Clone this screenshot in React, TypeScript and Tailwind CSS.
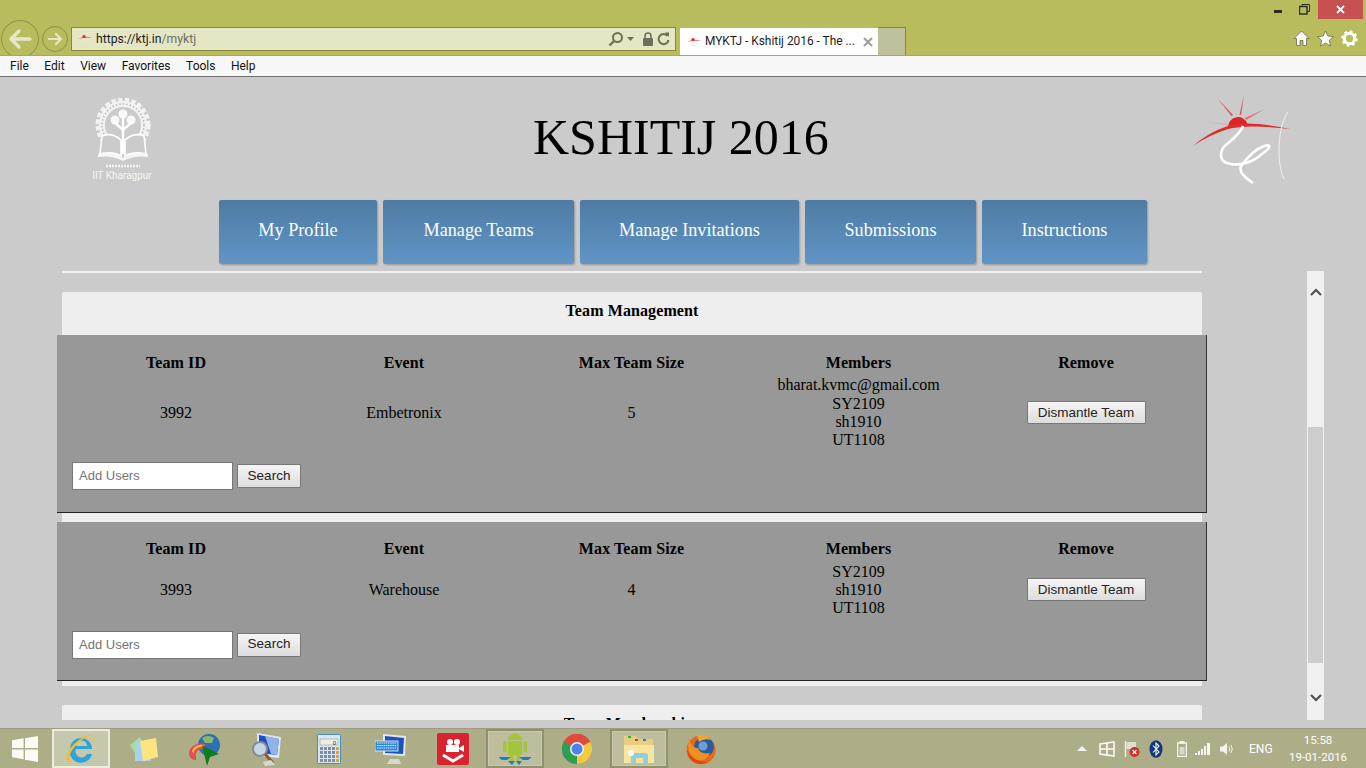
import React from 'react';

const UI = 'font-["Roboto",sans-serif]';

const Favicon = () => (
  <svg width="16" height="16" viewBox="0 0 16 16">
    <path d="M1 8 Q8 4 15 7 Q8 6 1 8Z" fill="#e86a6a" />
    <circle cx="7" cy="5.5" r="1.6" fill="#e02828" />
    <path d="M7 8 Q4 12 9 12 L12 9" fill="none" stroke="#e8e8e0" strokeWidth="1" />
  </svg>
);

const IitLogo = () => (
  <svg width="64" height="84" viewBox="0 0 64 84">
    <circle cx="33" cy="27" r="25" fill="none" stroke="#f2f2f2" strokeWidth="5" strokeDasharray="4.4 2.2" />
    <circle cx="33" cy="27" r="21" fill="none" stroke="#f2f2f2" strokeWidth="6" />
    <circle cx="33" cy="27" r="21" fill="none" stroke="#b8b8b8" strokeWidth="1.5" strokeDasharray="1.5 2" />
    <circle cx="33" cy="16" r="4.5" fill="#f8f8f8" />
    <circle cx="25" cy="22" r="4.5" fill="#f8f8f8" />
    <circle cx="41" cy="22" r="4.5" fill="#f8f8f8" />
    <path d="M33 18 V54 M33 32 L24 24 M33 32 L42 24" stroke="#fff" strokeWidth="2.4" fill="none" />
    <g transform="translate(0 -4)">
      <path d="M12 42 Q22 38 31 46 V62 Q22 57 10 60 Z M54 42 Q44 38 35 46 V62 Q44 57 56 60 Z" fill="#cbcbcb" stroke="#fff" strokeWidth="1.6" />
      <path d="M33 48 V60" stroke="#fff" strokeWidth="3" />
      <path d="M8 60 Q22 57 33 64 Q44 57 58 60 V63 Q44 61 33 67 Q22 61 8 63Z" fill="#f6f6f6" />
    </g>
    <path d="M16 68 H50" stroke="#f2f2f2" strokeWidth="2.4" strokeDasharray="2 1" />
    <text x="32" y="81" textAnchor="middle" fontSize="10" fill="#f4f4f4" fontFamily="Roboto, sans-serif">IIT Kharagpur</text>
  </svg>
);

const KtjLogo = () => (
  <svg width="102" height="94" viewBox="0 0 102 94">
    <path d="M13 30 L37 32 L37 33 Z" fill="#e8a0a0" />
    <path d="M53 3 L50 23 L48.5 23Z" fill="#d85050" />
    <path d="M27 7 L42 23 L40.5 24Z" fill="#d85050" />
    <path d="M74 17 L55 28 L54 26Z" fill="#e07070" />
    <path d="M37 35 A10 10 0 0 1 56.5 32 Q46 32 37 35Z" fill="#df2424" />
    <path d="M2 54 Q18 40 37 34 Q56 28 99 37 Q56 32 37 37 Q18 43 2 54Z" fill="#df2b2b" />
    <path d="M52 34 C49 42 42 47 36 52 C28 58 28 68 36 71 C48 75 62 70 71 62 C81 55 80 52 73 54 C65 57 56 66 50 74 C48 80 52 84 62 91" fill="none" stroke="#ffffff" strokeWidth="2.6" />
    <path d="M97 20 C90 30 88 45 88 60 C88 72 90 80 93 87" fill="none" stroke="#f4f4f4" strokeWidth="0.9" />
  </svg>
);

const Sticky = () => (
  <svg width="32" height="32" viewBox="0 0 32 32">
    <path d="M3 12 L13 4 L20 16 L9 22Z" fill="#a9dc9c" />
    <rect x="8" y="9" width="16" height="19" fill="#a5d3ee" />
    <path d="M13 8 L29 5 L31 24 L16 28Z" fill="#fbe580" />
  </svg>
);

const Idm = () => (
  <svg width="34" height="34" viewBox="0 0 34 34">
    <circle cx="21" cy="13" r="11" fill="#2b70b5" />
    <path d="M14 6 Q20 2 26 6 L24 11 L17 11Z" fill="#8ab86a" />
    <path d="M1 22 A12 10 0 0 1 17 12 L17 17 A7 6 0 0 0 8 24 L8 28 Q2 28 1 22Z" fill="#e34f4f" />
    <path d="M4 19 A10 8 0 0 1 16 13 L16 15 A8 6 0 0 0 6 22Z" fill="#f3c13a" />
    <path d="M14 13 L31 22 L22 25 L19 34Z" fill="#0f7a1e" />
  </svg>
);

const MagMonitor = () => (
  <svg width="32" height="34" viewBox="0 0 32 34">
    <path d="M6 1 L30 5 L28 26 L6 24Z" fill="#dde7f6" />
    <path d="M8 3 L28 7 L26 23 L8 21Z" fill="#1d4fc0" />
    <path d="M14 4 L28 7 L26 23 L20 22Z" fill="#92b3ea" />
    <circle cx="9" cy="17" r="7" fill="#c5d6e6" stroke="#8b8b8b" strokeWidth="2" />
    <path d="M14 22 L22 31" stroke="#8a5a2c" strokeWidth="3" />
    <path d="M12 30 L20 28 L24 33 L14 34Z" fill="#d6d6d0" />
  </svg>
);

const Calc = () => (
  <svg width="24" height="30" viewBox="0 0 24 30">
    <rect x="0.5" y="0.5" width="23" height="29" rx="1" fill="#d7e8f4" stroke="#3d8fc4" />
    <rect x="3" y="5" width="18" height="6" fill="#f1ede2" stroke="#8a8a80" strokeWidth="0.5" />
    <text x="19" y="10.5" textAnchor="end" fontSize="6" fill="#333" fontFamily="Roboto, sans-serif">0</text>
    {[13, 17, 21, 25].map((y) =>
      [3, 7, 11, 15, 19].map((x) => (
        <rect key={`${x}-${y}`} x={x} y={y} width="3" height="3" fill={x === 19 ? '#f09a28' : '#7c8ea0'} />
      )),
    )}
  </svg>
);

const KbMonitor = () => (
  <svg width="32" height="32" viewBox="0 0 32 32">
    <path d="M8 1 L31 3 L30 23 L8 22Z" fill="#dfe6f0" />
    <path d="M10 3 L29 5 L28 21 L10 20Z" fill="#1f52b8" />
    <path d="M15 26 L24 26 L26 31 L12 31Z" fill="#d8d8d0" />
    <rect x="0" y="8" width="23" height="10" fill="#3086d8" stroke="#cfe2f6" />
    {[10, 12.5, 15].map((y) => (
      <path key={y} d="M2 0 H21" transform={`translate(0 ${y})`} stroke="#e6f0fa" strokeWidth="1.2" strokeDasharray="1.5 0.7" />
    ))}
  </svg>
);

const VideoRed = () => (
  <svg width="32" height="32" viewBox="0 0 32 32">
    <rect width="32" height="32" rx="2" fill="#d9232e" />
    <circle cx="13" cy="9" r="3" fill="#fff" />
    <circle cx="20" cy="9" r="3" fill="#fff" />
    <path d="M9 12 H22 V19 H9Z M22 15 L27 12 V19 L22 16Z" fill="#fff" />
    <path d="M6 22 L16 28 L26 22" fill="none" stroke="#fff" strokeWidth="3" />
  </svg>
);

const Android = () => (
  <svg width="32" height="34" viewBox="0 0 32 34">
    <path d="M9 8 A7 6.5 0 0 1 23 8Z" fill="#a4c439" />
    <rect x="9" y="9" width="14" height="14" rx="1" fill="#a4c439" />
    <rect x="4" y="9" width="3.5" height="11" rx="1.7" fill="#a4c439" />
    <rect x="24.5" y="9" width="3.5" height="11" rx="1.7" fill="#a4c439" />
    <rect x="11" y="22" width="3.5" height="8" fill="#a4c439" />
    <rect x="17.5" y="22" width="3.5" height="8" fill="#a4c439" />
    <path d="M-1 25 H12 L8 28 H3Z M20 25 H33 L29 28 H24Z" fill="#1d7fbe" />
    <path d="M9 29 L13 33 L16 29Z M17 29 L20 33 L23 29Z" fill="#1d7fbe" />
  </svg>
);

const ChromeIcon = () => (
  <svg width="30" height="30" viewBox="0 0 30 30">
    <circle cx="15" cy="15" r="15" fill="#e04a3f" />
    <path d="M15 15 L2 7.5 A15 15 0 0 0 15 30Z" fill="#2f9e55" />
    <path d="M15 15 L15 30 A15 15 0 0 0 28 7.5 L28 7.5Z" fill="#f6c93e" />
    <path d="M15 15 L2 7.5 A15 15 0 0 1 28 7.5Z" fill="#de4b3d" />
    <circle cx="15" cy="15" r="7" fill="#f2f2f2" />
    <circle cx="15" cy="15" r="5.5" fill="#4a83ee" />
  </svg>
);

const Folder = () => (
  <svg width="32" height="32" viewBox="0 0 32 32">
    <path d="M1 3 H13 L15 6 H30 V14 H1Z" fill="#e9cd80" />
    <rect x="5" y="3" width="3" height="2" fill="#39a845" />
    <rect x="12" y="6" width="3" height="2" fill="#d43c2c" />
    <rect x="20" y="6" width="3" height="2" fill="#2a7ad0" />
    <path d="M1 12 H31 V30 H1Z" fill="#f8e6a0" />
    <path d="M8 31 V23 Q8 20 11 20 H22 Q25 20 25 23 V31 H20 V25 H13 V31Z" fill="#8fcde2" />
    <circle cx="8" cy="20" r="3" fill="#fdfcf0" />
  </svg>
);

const Firefox = () => (
  <svg width="30" height="32" viewBox="0 0 30 32">
    <circle cx="15" cy="17" r="14.5" fill="#e8681f" />
    <circle cx="18" cy="14" r="10" fill="#2a5c9c" />
    <circle cx="17" cy="13" r="4.5" fill="#6d9ed4" />
    <path d="M3 5 Q5 15 12 15 Q14 22 24 20 Q20 29 10 27 Q0 22 3 5Z" fill="#f09022" />
    <path d="M11 2 Q20 1 25 7 Q18 5 13 9Z" fill="#f3a52e" />
    <path d="M1 17 Q8 30 22 29 Q14 33 8 29 Q2 25 1 17Z" fill="#d9491a" />
  </svg>
);

const StartLogo = () => (
  <svg width="26" height="26" viewBox="0 0 28 28" fill="#fbfbf5">
    <path d="M0 4.5 L12.5 2.5 V13 H0Z M14 2.3 L28 0 V13 H14Z M0 14.5 H12.5 V25 L0 23Z M14 14.5 H28 V28 L14 25.5Z" />
  </svg>
);

const TaskButton = ({ state, children }: { state?: 'active' | 'open'; children: React.ReactNode }) => {
  const look =
    state === 'active'
      ? 'border-2 border-[#ededde] bg-[#c6c8ae]'
      : state === 'open'
        ? 'border-2 border-[#8f916e] bg-[#bcbe9d] shadow-[inset_0_0_0_1px_#c8cab0]'
        : 'border-2 border-transparent';
  return <div className={`flex h-[39px] w-[58px] shrink-0 items-center justify-center ${look}`}>{children}</div>;
};

const BrowserBar = () => (
  <div className={`shrink-0 ${UI}`}>
    <div className="h-[55px] bg-[#b8bc5c]">
      {/* window buttons */}
      <div className="flex h-[19px] items-start justify-end pr-[3px]">
        <div className="mr-[17px] mt-[10px] h-[3px] w-[8px] bg-[#2c2c1e]" />
        <svg className="mr-[8px] mt-[4px]" width="11" height="11" viewBox="0 0 11 11" fill="none" stroke="#2c2c1e">
          <rect x="0.5" y="2.5" width="7.5" height="7.5" strokeWidth="1.4" />
          <path d="M3 2.5 V0.5 H10.5 V7.5 H8" />
        </svg>
        <div className="flex h-[19px] w-[45px] items-center justify-center bg-[#c75050]">
          <svg width="9" height="9" viewBox="0 0 9 9" stroke="#fff" strokeWidth="1.8">
            <path d="M1 1 L8 8 M8 1 L1 8" />
          </svg>
        </div>
      </div>
      <div className="mt-[1px] flex items-start">
        {/* back and forward */}
        <div className="ml-[1px] h-[35px] w-[38px] overflow-hidden">
          <div className="flex h-[38px] w-[38px] items-center justify-center rounded-full border border-[#8f9140]">
            <svg width="24" height="22" viewBox="0 0 24 22" fill="none" stroke="#e6e7c8" strokeWidth="3.4" strokeLinecap="round" strokeLinejoin="round">
              <path d="M11 3 L3 11 L11 19 M3 11 H22" />
            </svg>
          </div>
        </div>
        <div className="ml-[3px] mt-[6px] flex h-[26px] w-[26px] items-center justify-center rounded-full border border-[#8f9140]">
          <svg width="16" height="14" viewBox="0 0 16 14" fill="none" stroke="#e6e7c8" strokeWidth="2.2" strokeLinecap="round" strokeLinejoin="round">
            <path d="M9 2 L14 7 L9 12 M14 7 H2" />
          </svg>
        </div>
        <div className="ml-[3px] mt-[7px] flex h-[24px] w-[605px] items-center border border-[#85873a] bg-[#e5e6c4] pl-[5px] pr-[5px]">
          <Favicon />
          <span className="ml-[3px] flex-1 text-[12.2px] leading-none text-[#1c1c1c]">
            https://ktj.in<span className="text-[#6e6e60]">/myktj</span>
          </span>
          <svg width="16" height="16" viewBox="0 0 16 16" fill="none" stroke="#6e6e58" strokeWidth="2">
            <circle cx="9.5" cy="6.5" r="4.5" />
            <path d="M6 10 L1.5 14.5" strokeWidth="2.4" />
          </svg>
          <svg className="ml-[3px]" width="7" height="4" viewBox="0 0 7 4" fill="#6e6e58">
            <path d="M0 0 H7 L3.5 4Z" />
          </svg>
          <svg className="ml-[8px]" width="12" height="14" viewBox="0 0 12 14">
            <path d="M3 6 V4 A3 3 0 0 1 9 4 V6" fill="none" stroke="#6e6e58" strokeWidth="1.6" />
            <rect x="1" y="6" width="10" height="8" rx="1" fill="#6e6e58" />
          </svg>
          <svg className="ml-[3px]" width="13" height="14" viewBox="0 0 13 14" fill="none" stroke="#6e6e58" strokeWidth="2">
            <path d="M10.5 4 A5 5 0 1 0 11.5 8" />
            <path d="M8 0.5 L12 0.5 L12 5Z" fill="#6e6e58" stroke="none" />
          </svg>
        </div>
        {/* tabs */}
        <div className="ml-[4px] mt-[8px] flex h-[27px] w-[198px] items-center bg-white pl-[6px] pr-[5px]">
          <Favicon />
          <span className="ml-[3px] flex-1 whitespace-nowrap pt-[1px] text-[11.9px] leading-none text-[#1c1c1c]">MYKTJ - Kshitij 2016 - The ...</span>
          <svg width="10" height="10" viewBox="0 0 10 10" stroke="#9c9c9c" strokeWidth="2">
            <path d="M1 1 L9 9 M9 1 L1 9" />
          </svg>
        </div>
        <div className="mt-[7px] h-[28px] w-[28px] border border-b-0 border-l-0 border-[#85873a] bg-[#bfc19c]" />
        <div className="ml-auto mr-[8px] mt-[10px] flex gap-[7px]">
          <svg width="17" height="17" viewBox="0 0 17 17" fill="#fff" stroke="#6a6a50" strokeWidth="0.8">
            <path d="M8.5 1 L16 8.5 H13.5 V15.5 H10 V10.5 H7 V15.5 H3.5 V8.5 H1Z" />
          </svg>
          <svg width="17" height="17" viewBox="0 0 17 17" fill="#fff" stroke="#6a6a50" strokeWidth="0.8">
            <path d="M8.5 1 L10.8 6 L16.5 6.6 L12.3 10.3 L13.5 16 L8.5 13 L3.5 16 L4.7 10.3 L0.5 6.6 L6.2 6Z" />
          </svg>
          <svg width="17" height="17" viewBox="0 0 17 17">
            <circle cx="8.5" cy="8.5" r="5.2" fill="none" stroke="#fff" strokeWidth="3" />
            <circle cx="8.5" cy="8.5" r="7" fill="none" stroke="#fff" strokeWidth="2.4" strokeDasharray="2.6 2.9" />
          </svg>
        </div>
      </div>
    </div>
    <div className="flex h-[22px] items-center gap-[15.5px] border-b border-t border-b-[#6f6f6f] border-t-[#a6a955] bg-[#f7f7f7] pl-[10px] text-[12px] leading-none text-[#111]">
      {['File', 'Edit', 'View', 'Favorites', 'Tools', 'Help'].map((m) => (
        <span key={m}>{m}</span>
      ))}
    </div>
  </div>
);

const NAV = [
  { label: 'My Profile', w: 'w-[158px]' },
  { label: 'Manage Teams', w: 'w-[191px]' },
  { label: 'Manage Invitations', w: 'w-[219px]' },
  { label: 'Submissions', w: 'w-[171px]' },
  { label: 'Instructions', w: 'w-[165px]' },
];

type Team = { id: string; event: string; size: string; members: string[]; pt: string; pb: string };

const TEAMS: Team[] = [
  { id: '3992', event: 'Embetronix', size: '5', members: ['bharat.kvmc@gmail.com', 'SY2109', 'sh1910', 'UT1108'], pt: 'pt-[19px]', pb: 'pb-[22px]' },
  { id: '3993', event: 'Warehouse', size: '4', members: ['SY2109', 'sh1910', 'UT1108'], pt: 'pt-[18px]', pb: 'pb-[21px]' },
];

const TeamCard = ({ team }: { team: Team }) => (
  <div className={`-mx-[5px] border-b border-r border-b-[#222] border-r-[#333] bg-[#989898] pl-[5px] ${team.pt} ${team.pb}`}>
    <div className="grid grid-cols-[228px_228px_227px_227px_228px] text-center text-[16px] leading-[18.3px] text-black">
      {['Team ID', 'Event', 'Max Team Size', 'Members', 'Remove'].map((h) => (
        <div key={h} className="pb-[4px] font-bold tracking-[0.1px]">{h}</div>
      ))}
      <div className="self-center">{team.id}</div>
      <div className="self-center">{team.event}</div>
      <div className="self-center">{team.size}</div>
      <div>
        {team.members.map((m) => (
          <div key={m}>{m}</div>
        ))}
      </div>
      <div className="flex items-center justify-center">
        <button className='mb-[1px] h-[23px] w-[119px] rounded-[1px] border border-[#777] bg-gradient-to-b from-[#f5f5f5] to-[#dddddd] font-["Liberation_Sans",sans-serif] text-[13.5px] leading-none text-[#222]'>
          Dismantle Team
        </button>
      </div>
    </div>
    <div className="ml-[10px] mt-[13px] flex items-center gap-[4px] font-['Liberation_Sans',sans-serif] leading-none">
      <div className="flex h-[28px] w-[161px] items-center border border-[#777] bg-white pb-[1px] pl-[6px] text-[13px] text-[#757575]">Add Users</div>
      <button className="h-[24px] w-[64px] rounded-[1px] border border-[#777] bg-gradient-to-b from-[#f5f5f5] to-[#dddddd] pb-[1px] text-[13.5px] text-[#222]">Search</button>
    </div>
  </div>
);

const Page = () => (
  <div className='flex min-h-0 flex-1 flex-col bg-[#cbcbcb] font-["Liberation_Serif",serif]'>
    <div className="flex h-[123px] shrink-0 items-start">
      <div className="ml-[90px] mt-[21px] shrink-0"><IitLogo /></div>
      <h1 className="ml-[379px] mt-[30px] whitespace-nowrap text-[50px] leading-[60px] text-black">KSHITIJ 2016</h1>
      <div className="ml-[362px] mt-[15px] shrink-0"><KtjLogo /></div>
    </div>
    <nav className="ml-[219px] flex shrink-0 gap-[6px]">
      {NAV.map((n) => (
        <a
          key={n.label}
          className={`flex h-[64px] items-center justify-center rounded-[2px] bg-gradient-to-b from-[#4e7ba3] to-[#6095c7] pb-[2px] text-[18.2px] text-white shadow-[1px_1px_2px_#999] ${n.w}`}
        >
          {n.label}
        </a>
      ))}
    </nav>
    <div className="mt-[7px] flex h-[449px] shrink-0 overflow-hidden">
      <div className="ml-[62px] w-[1140px] shrink-0">
        <div className="h-[2px] rounded-[1px] bg-[#f1f1f1]" />
        <section className="mt-[19px] rounded-t-[2px] bg-[#eeeeee] pb-[5px] pt-[10px] text-[16px]">
          <h2 className="mb-[14px] h-[19px] text-center font-bold leading-[18px] tracking-[0.1px] text-black">Team Management</h2>
          <div className="flex flex-col gap-[9px]">
            {TEAMS.map((t) => (
              <TeamCard key={t.id} team={t} />
            ))}
          </div>
        </section>
        <section className="mt-[19px] h-[40px] rounded-t-[2px] bg-[#eeeeee] pt-[10px] text-center text-[16px] font-bold leading-[18px] tracking-[0.1px] text-black">
          Team Memberships
        </section>
      </div>
      {/* page scrollbar */}
      <div className="ml-[105px] flex w-[17px] shrink-0 flex-col bg-[#f0f0f0]">
        <div className="flex h-[156px] justify-center pt-[17px]">
          <svg width="12" height="8" viewBox="0 0 12 8" fill="none" stroke="#505050" strokeWidth="2.2">
            <path d="M1 7 L6 2 L11 7" />
          </svg>
        </div>
        <div className="mx-[1px] h-[236px] bg-[#cdcdcd]" />
        <div className="flex flex-1 justify-center pt-[31px]">
          <svg width="12" height="8" viewBox="0 0 12 8" fill="none" stroke="#505050" strokeWidth="2.2">
            <path d="M1 1 L6 6 L11 1" />
          </svg>
        </div>
      </div>
    </div>
  </div>
);

const Taskbar = () => (
  <div className={`flex h-[40px] shrink-0 items-center border-t border-[#9c9c82] bg-[#adae87] ${UI}`}>
    <div className="flex w-[50px] shrink-0 justify-center"><StartLogo /></div>
    <div className="ml-[2px] flex gap-[4px]">
      <TaskButton state="active">
        <svg width="30" height="32" viewBox="0 0 30 32">
          <path d="M4 16 A11 11 0 0 1 26 16 H10 A6 6 0 0 0 21 21 H26 A11 11 0 0 1 4 16Z M10 13 H21 A5.5 5.5 0 0 0 10 13Z" fill="#2da3dc" fillRule="evenodd" />
          <path d="M27 2 Q20 0 8 11 Q-1 20 1 28 Q3 31 9 28 Q3 29 3 25 Q4 18 13 9 Q21 2 27 3 Q29 6 26 11 Q31 5 27 2Z" fill="#f4bd2b" />
        </svg>
      </TaskButton>
      <TaskButton><Sticky /></TaskButton>
      <TaskButton><Idm /></TaskButton>
      <TaskButton><MagMonitor /></TaskButton>
      <TaskButton><Calc /></TaskButton>
      <TaskButton><KbMonitor /></TaskButton>
      <TaskButton><VideoRed /></TaskButton>
      <TaskButton state="open"><Android /></TaskButton>
      <TaskButton><ChromeIcon /></TaskButton>
      <TaskButton state="open"><Folder /></TaskButton>
      <TaskButton><Firefox /></TaskButton>
    </div>
    <div className="ml-auto flex items-center text-white">
      <svg width="10" height="5" viewBox="0 0 10 5" fill="#f4f4ee"><path d="M5 0 L10 5 H0Z" /></svg>
      <svg className="ml-[12px]" width="16" height="16" viewBox="0 0 16 16" fill="none" stroke="#fbfbf5" strokeWidth="1.6">
        <path d="M1 3 L15 1 V15 L1 13Z M8 2 V14 M1 8 H15" />
      </svg>
      <svg className="ml-[9px]" width="16" height="18" viewBox="0 0 16 18">
        <path d="M1.5 1 V17" stroke="#f4f4ee" strokeWidth="1.4" />
        <path d="M2.5 2 H12 V9 H2.5Z" fill="#dfdfd0" />
        <circle cx="10.5" cy="12" r="5" fill="#d42a2a" />
        <path d="M8.5 10 L12.5 14 M12.5 10 L8.5 14" stroke="#fff" strokeWidth="1.3" />
      </svg>
      <svg className="ml-[9px]" width="14" height="18" viewBox="0 0 14 18">
        <ellipse cx="7" cy="9" rx="6.5" ry="8.8" fill="#12367e" />
        <path d="M4 5.5 L10 12 L7 15 V3 L10 6 L4 12.5" fill="none" stroke="#fff" strokeWidth="1.1" />
      </svg>
      <svg className="ml-[14px]" width="10" height="16" viewBox="0 0 10 16" fill="none" stroke="#f8f8f0" strokeWidth="1.2">
        <rect x="0.6" y="2" width="8.8" height="13.4" />
        <rect x="3" y="0.5" width="4" height="1.5" fill="#f8f8f0" />
        <rect x="2.5" y="6" width="5" height="7.5" fill="#f8f8f0" stroke="none" opacity="0.6" />
      </svg>
      <svg className="ml-[8px]" width="16" height="12" viewBox="0 0 16 12" fill="#f8f8f0">
        <rect x="0" y="10" width="2" height="2" /><rect x="3" y="8" width="2" height="4" /><rect x="6" y="6" width="2" height="6" />
        <rect x="9" y="3" width="2" height="9" /><rect x="12" y="0" width="3" height="12" />
      </svg>
      <svg className="ml-[8px]" width="16" height="14" viewBox="0 0 16 14">
        <path d="M1 4.5 H4 L8 1 V13 L4 9.5 H1Z" fill="#f4f4ee" />
        <path d="M10 4.5 Q11.5 7 10 9.5 M12 3 Q14.5 7 12 11" fill="none" stroke="#f4f4ee" />
      </svg>
      <span className="ml-[14px] w-[23px] text-center text-[12px] leading-none">ENG</span>
      <div className="ml-[17px] mr-[19px] w-[58px] text-center text-[11.5px] leading-[17px]">
        <div>15:58</div>
        <div className="whitespace-nowrap">19-01-2016</div>
      </div>
    </div>
  </div>
);

export default function App() {
  return (
    <div className="flex h-[768px] w-[1366px] flex-col overflow-hidden">
      <BrowserBar />
      <Page />
      <Taskbar />
    </div>
  );
}
